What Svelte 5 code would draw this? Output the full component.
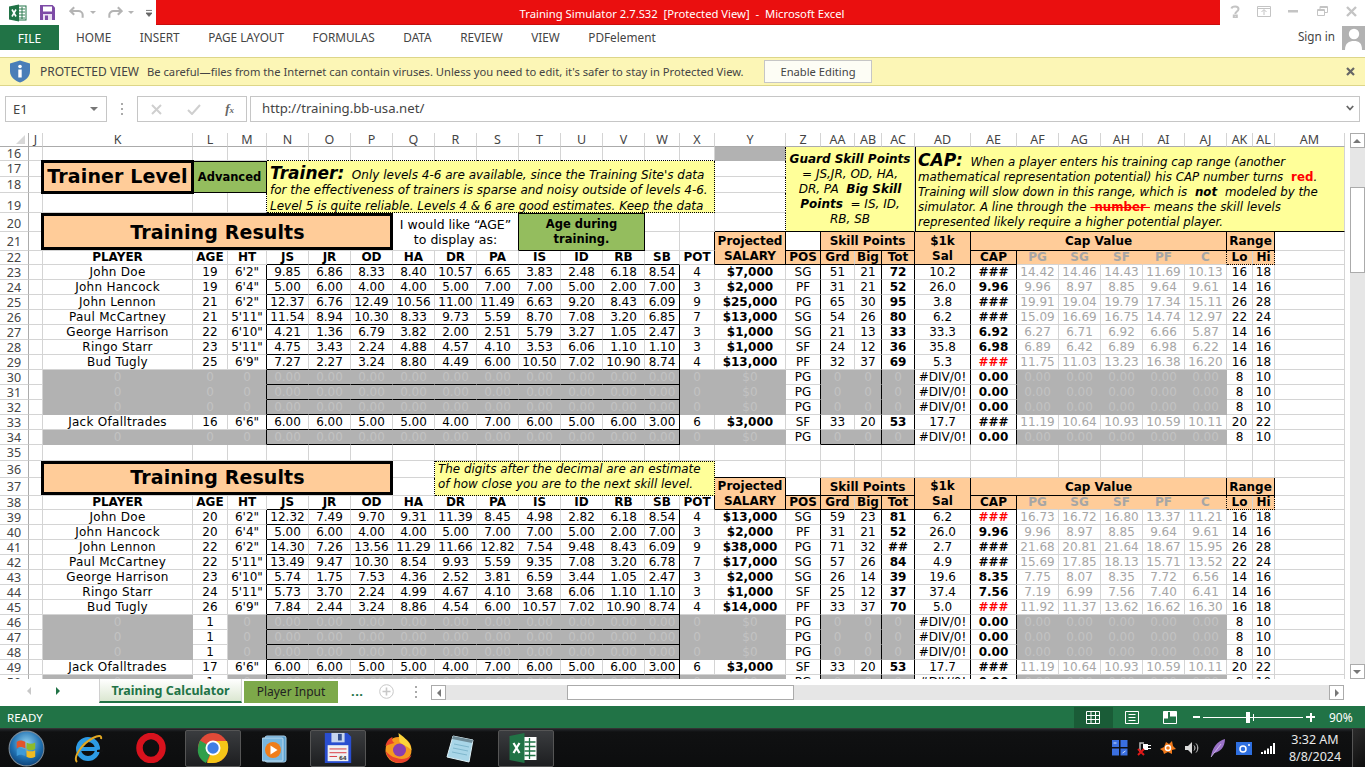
<script>
  // Excel window showing the training simulator sheet. The sheet is one plain table,
  // rows come from the player lists below.
  const COLS = [
    ['', 29], ['J', 14], ['K', 150], ['L', 35], ['M', 39], ['N', 42], ['O', 42], ['P', 42], ['Q', 42], ['R', 42],
    ['S', 42], ['T', 42], ['U', 42], ['V', 42], ['W', 35], ['X', 35], ['Y', 71], ['Z', 35], ['AA', 34], ['AB', 27],
    ['AC', 33], ['AD', 56], ['AE', 46], ['AF', 42], ['AG', 42], ['AH', 42], ['AI', 42], ['AJ', 42], ['AK', 26], ['AL', 22], ['AM', 70]
  ];
  const SKILLS = ['JS', 'JR', 'OD', 'HA', 'DR', 'PA', 'IS', 'ID', 'RB', 'SB'];
  const POSN = ['PG', 'SG', 'SF', 'PF', 'C'];
  const ZERO10 = Array(10).fill('0.00');
  const ZERO5 = Array(5).fill('0.00');

  const p = (name, age, ht, sk, pot, sal, pos, pts, k, cap, caps, range) => ({
    name, age, ht, sk: sk.split(' '), pot, sal, pos, pts: pts.split(' '), k,
    cap: cap.replace('!', ''), red: cap[0] === '!', caps: caps.split(' '), range: range.split(' ')
  });
  const blank = (age, last = false) => ({ blank: true, age, last });

  const first = [
    p('John Doe', '19', `6'2"`, '9.85 6.86 8.33 8.40 10.57 6.65 3.83 2.48 6.18 8.54', '4', '$7,000', 'SG', '51 21 72', '10.2', '###', '14.42 14.46 14.43 11.69 10.13', '16 18'),
    p('John Hancock', '19', `6'4"`, '5.00 6.00 4.00 4.00 5.00 7.00 7.00 5.00 2.00 7.00', '3', '$2,000', 'PF', '31 21 52', '26.0', '9.96', '9.96 8.97 8.85 9.64 9.61', '14 16'),
    p('John Lennon', '21', `6'2"`, '12.37 6.76 12.49 10.56 11.00 11.49 6.63 9.20 8.43 6.09', '9', '$25,000', 'PG', '65 30 95', '3.8', '###', '19.91 19.04 19.79 17.34 15.11', '26 28'),
    p('Paul McCartney', '21', `5'11"`, '11.54 8.94 10.30 8.33 9.73 5.59 8.70 7.08 3.20 6.85', '7', '$13,000', 'SG', '54 26 80', '6.2', '###', '15.09 16.69 16.75 14.74 12.97', '22 24'),
    p('George Harrison', '22', `6'10"`, '4.21 1.36 6.79 3.82 2.00 2.51 5.79 3.27 1.05 2.47', '3', '$1,000', 'SG', '21 13 33', '33.3', '6.92', '6.27 6.71 6.92 6.66 5.87', '14 16'),
    p('Ringo Starr', '23', `5'11"`, '4.75 3.43 2.24 4.88 4.57 4.10 3.53 6.06 1.10 1.10', '3', '$1,000', 'SF', '24 12 36', '35.8', '6.98', '6.89 6.42 6.89 6.98 6.22', '14 16'),
    p('Bud Tugly', '25', `6'9"`, '7.27 2.27 3.24 8.80 4.49 6.00 10.50 7.02 10.90 8.74', '4', '$13,000', 'PF', '32 37 69', '5.3', '!###', '11.75 11.03 13.23 16.38 16.20', '16 18'),
    blank('0'), blank('0'), blank('0'),
    p('Jack Ofalltrades', '16', `6'6"`, '6.00 6.00 5.00 5.00 4.00 7.00 6.00 5.00 6.00 3.00', '6', '$3,000', 'SF', '33 20 53', '17.7', '###', '11.19 10.64 10.93 10.59 10.11', '20 22'),
    blank('0', true)
  ];
  const second = [
    p('John Doe', '20', `6'2"`, '12.32 7.49 9.70 9.31 11.39 8.45 4.98 2.82 6.18 8.54', '4', '$13,000', 'SG', '59 23 81', '6.2', '!###', '16.73 16.72 16.80 13.37 11.21', '16 18'),
    p('John Hancock', '20', `6'4"`, '5.00 6.00 4.00 4.00 5.00 7.00 7.00 5.00 2.00 7.00', '3', '$2,000', 'PF', '31 21 52', '26.0', '9.96', '9.96 8.97 8.85 9.64 9.61', '14 16'),
    p('John Lennon', '22', `6'2"`, '14.30 7.26 13.56 11.29 11.66 12.82 7.54 9.48 8.43 6.09', '9', '$38,000', 'PG', '71 32 ##', '2.7', '###', '21.68 20.81 21.64 18.67 15.95', '26 28'),
    p('Paul McCartney', '22', `5'11"`, '13.49 9.47 10.30 8.54 9.93 5.59 9.35 7.08 3.20 6.78', '7', '$17,000', 'SG', '57 26 84', '4.9', '###', '15.69 17.85 18.13 15.71 13.52', '22 24'),
    p('George Harrison', '23', `6'10"`, '5.74 1.75 7.53 4.36 2.52 3.81 6.59 3.44 1.05 2.47', '3', '$2,000', 'SG', '26 14 39', '19.6', '8.35', '7.75 8.07 8.35 7.72 6.56', '14 16'),
    p('Ringo Starr', '24', `5'11"`, '5.73 3.70 2.24 4.99 4.67 4.10 3.68 6.06 1.10 1.10', '3', '$1,000', 'SF', '25 12 37', '37.4', '7.56', '7.19 6.99 7.56 7.40 6.41', '14 16'),
    p('Bud Tugly', '26', `6'9"`, '7.84 2.44 3.24 8.86 4.54 6.00 10.57 7.02 10.90 8.74', '4', '$14,000', 'PF', '33 37 70', '5.0', '!###', '11.92 11.37 13.62 16.62 16.30', '16 18'),
    blank('1'), blank('1'), blank('1'),
    p('Jack Ofalltrades', '17', `6'6"`, '6.00 6.00 5.00 5.00 4.00 7.00 6.00 5.00 6.00 3.00', '6', '$3,000', 'SF', '33 20 53', '17.7', '###', '11.19 10.64 10.93 10.59 10.11', '20 22'),
    blank('1', true)
  ];
  const TABS = ['HOME', 'INSERT', 'PAGE LAYOUT', 'FORMULAS', 'DATA', 'REVIEW', 'VIEW', 'PDFelement'];
</script>

{#snippet dataRow(n, r)}
  <tr style="height:15px">
    <th class="rh">{n}</th>
    <td></td>
    {#if r.blank}
      <td class="g gt">0</td>
      <td class={r.age === '1' ? '' : 'g gt'}>{r.age}</td>
      <td class="g gt kr">0</td>
      {#each ZERO10 as z, i}<td class="g gt kb" class:kr={i === 9}>{z}</td>{/each}
      <td class="g gt">0</td>
      <td class="g gt">$0</td>
      <td class="kr">PG</td>
      <td class="g gt" class:kb={r.last}>0</td>
      <td class="g gt kr" class:kb={r.last}>0</td>
      <td class="g gt kr" class:kb={r.last}>0</td>
      <td class="kr">#DIV/0!</td>
      <td class="b kr">0.00</td>
      {#each ZERO5 as z}<td class="g gt">{z}</td>{/each}
      <td>8</td>
      <td>10</td>
    {:else}
      <td class="nm">{r.name}</td>
      <td>{r.age}</td>
      <td class="kr">{r.ht}</td>
      {#each r.sk as v, i}<td class="kb" class:kr={i === 9}>{v}</td>{/each}
      <td>{r.pot}</td>
      <td class="b">{r.sal}</td>
      <td class="kr">{r.pos}</td>
      <td>{r.pts[0]}</td>
      <td class="kr">{r.pts[1]}</td>
      <td class="b kr">{r.pts[2]}</td>
      <td class="kr">{r.k}</td>
      <td class="b kr" class:red={r.red}>{r.cap}</td>
      {#each r.caps as v}<td class="soft">{v}</td>{/each}
      <td>{r.range[0]}</td>
      <td>{r.range[1]}</td>
    {/if}
    <td></td>
  </tr>
{/snippet}

{#snippet headTop()}
  <td class="or b kr kb two pt" rowspan="2">Projected<br />SALARY</td>
  <td class="kr kb"></td>
  <td class="or b kr kb pt" colspan="3">Skill Points</td>
  <td class="or b kr kb two pt" rowspan="2">$1k<br />Sal</td>
  <td class="or b kr kb pt" colspan="6">Cap Value</td>
  <td class="or b kb kr pt" colspan="2">Range</td>
  <td></td>
{/snippet}

{#snippet headBottom()}
  <td class="or b kr kb">POS</td>
  <td class="or b kb">Grd</td>
  <td class="or b kb kr">Big</td>
  <td class="or b kb kr">Tot</td>
  <td class="or b kb kr">CAP</td>
  {#each POSN as n, i}<td class="or b softh" class:dotr={i === 4}>{n}</td>{/each}
  <td class="or b do">Lo</td>
  <td class="or b do dotr">Hi</td>
  <td></td>
{/snippet}

<div class="win">
  <!-- title bar -->
  <header class="title">
    <div class="qat">
      <svg class="xl" width="18" height="18" viewBox="0 0 18 18"><rect x="7" y="2" width="10" height="14" fill="#fff" stroke="#217346" /><path d="M10 5h6M10 8h6M10 11h6M10 14h6M13 3v12" stroke="#217346" stroke-width=".9" /><path d="M0 2.5 10 .5v17L0 15.5z" fill="#217346" /><path d="M3 5.5l4 7M7 5.5l-4 7" stroke="#fff" stroke-width="1.6" /></svg>
      <svg class="save" width="15" height="15" viewBox="0 0 15 15"><path d="M0 0h12.5L15 2.5V15H0z" fill="#7d4ba6" /><rect x="3" y="1.5" width="9" height="5" fill="#fff" /><rect x="3" y="9" width="9" height="6" fill="#e9dff1" /><rect x="5" y="10.5" width="3" height="4.5" fill="#7d4ba6" /></svg>
      <svg class="undo" width="16" height="13" viewBox="0 0 17 13"><path d="M5.5 1 1.5 5l4 4M2 5h8a4.500 4 0 0 1 4.500 4v3" fill="none" stroke="#b4b4b4" stroke-width="2.200" /></svg>
      <span class="caret"></span>
      <svg class="redo" width="16" height="13" viewBox="0 0 17 13"><path d="M11.500 1l4 4-4 4M15 5H7a4.500 4 0 0 0-4.500 4v3" fill="none" stroke="#b4b4b4" stroke-width="2.200" /></svg>
      <span class="caret"></span>
      <svg class="cust" width="6" height="8" viewBox="0 0 7 8"><path d="M0 1h7M0 4h7l-3.500 4z" stroke="#666" fill="#666" /></svg>
    </div>
    <div class="redbar">Training Simulator 2.7.S32  [Protected View]  -  Microsoft Excel</div>
    <div class="winbtns">
      <svg width="10" height="13" viewBox="0 0 10 13"><path d="M1.500 3.500C2 1 8.500.5 8.500 4c0 2.500-3.200 2.500-3.200 5M3.800 10.500h3v2.500h-3z" fill="none" stroke="#c4c4c4" stroke-width="2" /></svg>
      <svg width="14" height="11" viewBox="0 0 14 11"><path d="M.5.500h13v10H.500zM.5 2.500h13M7 9V4M4.500 6 7 3.500 9.500 6" fill="none" stroke="#c4c4c4" /></svg>
      <svg width="10" height="3" viewBox="0 0 10 3"><rect width="10" height="2.500" fill="#c4c4c4" /></svg>
      <svg class="rest" width="11" height="10" viewBox="0 0 11 10"><path d="M.5 3.500h7v6h-7zM.5 4.500h7M3 3.500v-3h7.500v6h-3M3 1.500h7.500" fill="none" stroke="#c4c4c4" /></svg>
      <svg class="clos" width="11" height="11" viewBox="0 0 11 11"><path d="M1 1l9 9M10 1l-9 9" stroke="#c4c4c4" stroke-width="2.400" /></svg>
    </div>
  </header>

  <!-- ribbon tabs -->
  <nav class="tabs">
    <div class="file">FILE</div>
    {#each TABS as t}<span class="tab">{t}</span>{/each}
    <span class="signin">Sign in</span>
    <svg class="avatar" width="23" height="24" viewBox="0 0 23 24"><rect width="23" height="24" fill="#b2b2b2" /><circle cx="12" cy="8" r="5.200" fill="#fff" /><path d="M3 24c0-7 4-9 9-9s8 2 8 9z" fill="#fff" /></svg>
  </nav>

  <!-- protected view message -->
  <div class="msg">
    <svg class="shield" width="20" height="23" viewBox="0 0 20 23"><path d="M10 .5 20 3.500V11c0 6-4.500 9.500-10 11.500C4.500 20.500 0 17 0 11V3.500z" fill="#4a7eb8" /><circle cx="10" cy="6.500" r="1.800" fill="#fff" /><rect x="8.300" y="9.500" width="3.400" height="8" fill="#fff" /></svg>
    <b>PROTECTED VIEW</b>
    <span>Be careful—files from the Internet can contain viruses. Unless you need to edit, it's safer to stay in Protected View.</span>
    <button class="enable">Enable Editing</button>
    <svg class="msgx" width="9" height="9" viewBox="0 0 9 9"><path d="M1 1l7 7M8 1 1 8" stroke="#666" stroke-width="2.200" /></svg>
  </div>

  <!-- formula bar -->
  <div class="fbar">
    <div class="namebox"><span>E1</span><i class="tri"></i></div>
    <div class="dots"><i></i><i></i><i></i></div>
    <div class="fbtns">
      <svg width="11" height="11" viewBox="0 0 11 11"><path d="M1 1l9 9M10 1l-9 9" stroke="#cfcfcf" stroke-width="2" /></svg>
      <svg width="14" height="11" viewBox="0 0 14 11"><path d="M1 6l4 4 8-9" fill="none" stroke="#cfcfcf" stroke-width="2" /></svg>
      <em class="fx">f<small>x</small></em>
    </div>
    <div class="formula"><span>http://training.bb-usa.net/</span>
      <svg width="8" height="6" viewBox="0 0 8 6"><path d="M.8 1 4 4.500 7.200 1" fill="none" stroke="#666" stroke-width="1.800" /></svg>
    </div>
  </div>

  <!-- sheet -->
  <div class="sheetwrap">
    <div class="sheet">
      <table>
        <colgroup>{#each COLS as c}<col style="width:{c[1]}px" />{/each}</colgroup>
        <thead>
          <tr style="height:14px">
            {#each COLS as c, i}
              <th class={i ? 'ch' : 'corner'}>{#if i}{c[0]}{:else}<i></i>{/if}</th>
            {/each}
          </tr>
        </thead>
        <tbody>
          <tr style="height:14px">
            <th class="rh">16</th>
            <td></td><td></td><td></td><td></td>
            {#each Array(11) as _}<td class="dotb"></td>{/each}
            <td class="g dotr"></td>
            <td class="yel guard kb" colspan="4" rowspan="5">
              <b><i>Guard Skill Points</i></b><br /><i>= JS,JR, OD, HA,</i><br /><i>DR, PA</i>&nbsp; <b><i>Big Skill</i></b><br /><b><i>Points</i></b><i>&nbsp; = IS, ID,</i><br /><i>RB, SB</i>
            </td>
            <td class="yel cap kl" colspan="10" rowspan="5">
              <p><b class="capt">CAP:</b>&nbsp; When a player enters his training cap range (another</p>
              <p>mathematical representation potential) his CAP number turns <b class="redt">&nbsp;red</b>.</p>
              <p>Training will slow down in this range, which is <b>&nbsp;not&nbsp;</b> modeled by the</p>
              <p>simulator. A line through the <b class="strike">&nbsp;number&nbsp;</b> means the skill levels</p>
              <p>represented likely require a higher potential player.</p>
            </td>
          </tr>
          <tr style="height:16px">
            <th class="rh">17</th>
            <td></td>
            <td class="box thick" rowspan="2"><span>Trainer Level</span></td>
            <td class="grn kb kr kt adv" colspan="2" rowspan="2">Advanced</td>
            <td class="yel note" colspan="11" rowspan="3">
              <div class="lines">
                <p><b class="capt">Trainer:</b>&nbsp; Only levels 4-6 are available, since the Training Site's data</p>
                <p>for the effectiveness of trainers is sparse and noisy outside of levels 4-6.</p>
                <p>Level 5 is quite reliable. Levels 4 &amp; 6 are good estimates. Keep the data</p>
              </div>
            </td>
            <td class="dotr"></td>
          </tr>
          <tr style="height:16px">
            <th class="rh">18</th>
            <td></td>
            <td class="dotr"></td>
          </tr>
          <tr style="height:20px">
            <th class="rh low">19</th>
            <td></td><td></td><td></td><td class="dotr"></td>
            <td class="dotr"></td>
          </tr>
          <tr style="height:19px">
            <th class="rh low2">20</th>
            <td></td>
            <td class="box thick wide" colspan="6" rowspan="2"><span class="tr1">Training Results</span></td>
            <td class="plain kr" colspan="3" rowspan="2">I would like “AGE”<br />to display as:</td>
            <td class="grn b kb kr kt age" colspan="3" rowspan="2">Age during<br />training.</td>
            <td></td><td></td>
            <td class="kb dotr"></td>
          </tr>
          <tr style="height:19px">
            <th class="rh">21</th>
            <td></td>
            <td></td><td class="kr"></td>
            {@render headTop()}
          </tr>
          <tr style="height:14px">
            <th class="rh">22</th>
            <td></td>
            <td class="b">PLAYER</td><td class="b">AGE</td><td class="b">HT</td>
            {#each SKILLS as s}<td class="b kb">{s}</td>{/each}
            <td class="b kr">POT</td>
            {@render headBottom()}
          </tr>
          {#each first as r, i}{@render dataRow(23 + i, r)}{/each}
          <tr style="height:16px"><th class="rh">35</th>{#each Array(30) as _}<td></td>{/each}</tr>
          <tr style="height:17px">
            <th class="rh">36</th>
            <td></td>
            <td class="box thick wide" colspan="6" rowspan="2"><span class="tr2">Training Results</span></td>
            <td class="dotr"></td>
            <td class="yel note short" colspan="7" rowspan="2">
              <p>The digits after the decimal are an estimate</p>
              <p>of how close you are to the next skill level.</p>
            </td>
            <td class="kb"></td>
            {#each Array(14) as _}<td></td>{/each}
          </tr>
          <tr style="height:18px">
            <th class="rh">37</th>
            <td></td>
            <td class="dotr"></td>
            {@render headTop()}
          </tr>
          <tr style="height:14px">
            <th class="rh">38</th>
            <td></td>
            <td class="b">PLAYER</td><td class="b">AGE</td><td class="b">HT</td>
            {#each SKILLS as s}<td class="b kb">{s}</td>{/each}
            <td class="b kr">POT</td>
            {@render headBottom()}
          </tr>
          {#each second as r, i}{@render dataRow(39 + i, r)}{/each}
        </tbody>
      </table>
    </div>
    <aside class="vscroll">
      <button class="sb" aria-label="up"><i class="up"></i></button>
      <div class="track"><div class="thumb"></div></div>
      <button class="sb" aria-label="down"><i class="down"></i></button>
    </aside>
  </div>

  <!-- sheet tabs and horizontal scroll -->
  <div class="sheettabs">
    <i class="nav navl"></i>
    <i class="nav navr"></i>
    <div class="stab active">Training Calculator</div>
    <div class="stab other">Player Input</div>
    <span class="more">...</span>
    <svg class="plus" width="15" height="15" viewBox="0 0 15 15"><circle cx="7.500" cy="7.500" r="6.800" fill="none" stroke="#c8c8c8" /><path d="M7.500 3.500v8M3.500 7.500h8" stroke="#c8c8c8" stroke-width="1.600" /></svg>
    <div class="dots sdots"><i></i><i></i><i></i></div>
    <div class="hscroll">
      <button class="sb" aria-label="left"><i class="left"></i></button>
      <div class="htrack"><div class="hthumb"></div></div>
      <button class="sb" aria-label="right"><i class="right"></i></button>
    </div>
  </div>

  <!-- status bar -->
  <footer class="status">
    <span class="ready">READY</span>
    <div class="views">
      <div class="view sel"><svg width="14" height="13" viewBox="0 0 14 13"><path d="M.5.500h13v12H.500zM.5 4.500h13M.5 8.500h13M5 .500v12M9.500.500v12" fill="none" stroke="#fff" /></svg></div>
      <div class="view"><svg width="14" height="13" viewBox="0 0 14 13"><path d="M.5.500h13v12H.500z" fill="none" stroke="#fff" /><path d="M3.500 3.500h7M3.500 6.500h7M3.500 9.500h7" stroke="#fff" /></svg></div>
      <div class="view"><svg width="14" height="13" viewBox="0 0 14 13"><path d="M.5.500h13v12H.500z" fill="none" stroke="#fff" /><path d="M.5.500h4.500v7H.500zM7 .500h6.500v5H7z" fill="#fff" /></svg></div>
    </div>
    <div class="zoomer">
      <i class="zm"></i>
      <div class="zline"><i class="ztick"></i><i class="zknob"></i></div>
      <i class="zp"></i>
    </div>
    <span class="pct">90%</span>
  </footer>

  <!-- windows taskbar -->
  <div class="taskbar">
    <div class="orb">
      <svg width="37" height="37" viewBox="0 0 34 34"><defs><radialGradient id="o" cx=".5" cy=".35" r=".7"><stop offset="0" stop-color="#8fd0ef" /><stop offset=".6" stop-color="#1f6fb0" /><stop offset="1" stop-color="#0b3a6d" /></radialGradient></defs><circle cx="17" cy="17" r="16" fill="url(#o)" stroke="#7a8a98" /><path d="M8 11c3-2 5-1.500 8 0v6c-3-1.500-5-2-8 0z" fill="#e2542c" /><path d="M17 11.500c3 1.500 5 1.500 8 0v6c-3 1.500-5 1.500-8 0z" fill="#8dbb2a" /><path d="M8 18c3-2 5-1.500 8 0v6c-3-1.500-5-2-8 0z" fill="#3e9ad8" /><path d="M17 18.500c3 1.500 5 1.500 8 0v6c-3 1.500-5 1.500-8 0z" fill="#f1bb22" /></svg>
    </div>
    <div class="app">
      <svg width="30" height="32" viewBox="0 0 30 32"><circle cx="15" cy="17" r="9.500" fill="none" stroke="#2d9be4" stroke-width="5" /><path d="M8 17h15" stroke="#2d9be4" stroke-width="4" /><path d="M24 20h6v-3l-6 1z" fill="#101112" /><path d="M4 30C0 26 8 12 20 6c5-2.500 9-3 8 1" fill="none" stroke="#e2a823" stroke-width="2" /></svg>
    </div>
    <div class="app">
      <svg width="30" height="30" viewBox="0 0 30 30"><ellipse cx="15" cy="15" rx="11.500" ry="12" fill="none" stroke="#d7121d" stroke-width="6.500" /></svg>
    </div>
    <div class="app on">
      <svg width="32" height="32" viewBox="0 0 32 32"><circle cx="16" cy="16" r="15" fill="#e14a38" /><path d="M3 8.500 16 16 9 31C3 28 0 22 1 16c.3-2.800 1-5.300 2-7.500z" fill="#2f9f4a" /><path d="M16 9h14c2.500 6 1 13-3 17-3 3.500-7 5-11 5l-6 0 6-15z" fill="#f5c518" /><circle cx="16" cy="16" r="7.500" fill="#fff" /><circle cx="16" cy="16" r="5.700" fill="#3f7ee4" /></svg>
    </div>
    <div class="app">
      <svg width="28" height="32" viewBox="0 0 28 32"><rect x="3" y="4" width="21" height="26" rx="2" fill="#5a9fce" stroke="#a7cde6" /><rect x="0" y="6" width="21" height="23" rx="1" fill="#78b6de" stroke="#bcd9ec" /><circle cx="11" cy="18" r="8" fill="#ef7d1a" /><path d="M8.500 13.500v9l7-4.500z" fill="#fff" /></svg>
    </div>
    <div class="app on">
      <svg width="32" height="32" viewBox="0 0 30 34"><path d="M1 1h24l4 4v28H1z" fill="#2a4ed0" /><rect x="8" y="1" width="14" height="10" fill="#c9d6ee" /><rect x="15" y="2" width="4" height="7" fill="#36518f" /><rect x="4" y="14" width="22" height="17" fill="#f1f1f1" /><path d="M6 18h18M6 22h18M6 26h8" stroke="#d8333a" /><text x="16" y="30" class="f64">64</text></svg>
    </div>
    <div class="app ff">
      <svg width="29" height="32" viewBox="0 0 28 32"><circle cx="14" cy="18" r="13" fill="#f59a1f" /><path d="M14 1c7 5 12 10 13 17-4-4-9-5-12-8z" fill="#fbd43a" /><path d="M1 14c1-5 4-8 7-9-1 3 0 5 2 6-4 1-7 2-9 3z" fill="#e8422d" /><circle cx="15" cy="18" r="6.500" fill="#8a3fb0" /><path d="M1 19c2 8 8 12 14 12s10-3 12-8c-4 4-10 5-15 3-5-1-8-4-11-7z" fill="#e8422d" /></svg>
    </div>
    <div class="app ff">
      <svg width="30" height="32" viewBox="0 0 28 32"><path d="M6 4 26 8 22 30 0 25z" fill="#a9d6e8" stroke="#dff1f7" /><path d="M6 4 26 8 25 11 5 7z" fill="#708c98" /><path d="M7 12l15 3M6 16l15 3M5 20l15 3" stroke="#7fb7cd" /></svg>
    </div>
    <div class="app on ff">
      <svg width="29" height="32" viewBox="0 0 28 32"><rect x="12" y="5" width="15" height="23" fill="#fff" /><path d="M15 10h11M15 14.500h11M15 19h11M15 23.500h11M20 6v21" stroke="#217346" stroke-width="1.300" /><path d="M0 4 15 1v30L0 28z" fill="#217346" /><path d="M4 11l6 10M10 11 4 21" stroke="#fff" stroke-width="2.200" /></svg>
    </div>
    <div class="tray">
      <svg width="16" height="16" viewBox="0 0 16 16"><rect width="7" height="7" fill="#3a6fe0" /><rect x="8.500" width="7" height="7" fill="#3a6fe0" /><rect y="8.500" width="7" height="7" fill="#3a6fe0" /><rect x="8.500" y="8.500" width="7" height="7" fill="#3a6fe0" /><path d="M1.500 3h3M10.500 13l3-2" stroke="#cfe0ff" /></svg>
      <svg width="14" height="16" viewBox="0 0 14 16"><path d="M7 3H3v9" fill="none" stroke="#bbb" stroke-width="1.500" /><rect x="6" y="4" width="5" height="6" fill="#fff" /><path d="M11 5.500h3M11 8.500h3" stroke="#fff" /><path d="M1 9l6 6M7 9l-6 6" stroke="#e01818" stroke-width="2" /></svg>
      <svg width="16" height="14" viewBox="0 0 16 14"><path d="M0 8 4 6 6 1l3 2 3-3 1 5 3 3-4 1 0 4-4-2-4 2-1-3z" fill="#f07a1c" /><circle cx="8" cy="7" r="2.500" fill="none" stroke="#fff" stroke-width="1.400" /></svg>
      <svg width="14" height="14" viewBox="0 0 14 14"><path d="M0 5h3l4-4v12l-4-4H0z" fill="#dadada" /><path d="M9 4.500c1.300 1.500 1.300 3.500 0 5M11 2.500c2.400 2.500 2.400 6.500 0 9" fill="none" stroke="#dadada" /></svg>
      <svg class="feather" width="15" height="20" viewBox="0 0 15 20"><path d="M1 19C2 10 7 3 15 1c0 8-5 13-11 14z" fill="#9a72c8" /><path d="M1 19 11 6" stroke="#d8c6ee" stroke-width=".8" /></svg>
      <svg class="cam" width="16" height="13" viewBox="0 0 16 13"><rect width="16" height="13" fill="#2e6fe0" /><circle cx="7" cy="7" r="3" fill="none" stroke="#fff" stroke-width="1.500" /><circle cx="13" cy="3" r="1" fill="#fff" /></svg>
      <svg width="14" height="11" viewBox="0 0 14 11"><rect y="9" width="2" height="2" fill="#fff" /><rect x="3" y="7.500" width="2" height="3.500" fill="#fff" /><rect x="6" y="5.500" width="2" height="5.500" fill="#fff" /><rect x="9" y="3" width="2" height="8" fill="#fff" /><rect x="12" y="0" width="2" height="11" fill="#fff" /></svg>
    </div>
    <div class="clock"><span>3:32 AM</span><span>8/8/2024</span></div>
    <div class="desk"></div>
  </div>
</div>

<style>
  :global(body) { margin: 0; background: #fff; overflow: hidden; }
  .win {
    width: 1365px; height: 767px; display: flex; flex-direction: column; overflow: hidden;
    font-family: "Noto Sans", "Open Sans", sans-serif; font-size: 12px; color: #444;
  }

  /* title bar */
  .title { height: 25px; display: flex; flex: none; }
  .qat { width: 156px; flex: none; position: relative; display: flex; align-items: center; }
  .qat svg { flex: none; }
  .xl { margin-left: 9px; }
  .save { margin-left: 13px; }
  .undo { margin-left: 14px; }
  .caret { width: 0; height: 0; border: 3px solid transparent; border-top: 3px solid #b4b4b4; border-bottom: 0; margin-left: 5px; }
  .redo { margin-left: 11px; }
  .cust { margin-left: 12px; }
  .redbar {
    width: 1064px; height: 24.500px; background: #ea0f0f; color: #fff; flex: none; text-align: center; white-space: pre;
    line-height: 27px; border-bottom: 1px solid #c90d0d; box-sizing: border-box; padding-right: 12px; font-size: 11.250px;
  }
  .winbtns { flex: 1; display: flex; align-items: center; gap: 17px; padding: 0 0 3px 10px; }
  .rest { margin-left: 2px; }
  .clos { margin-left: 1px; }

  /* ribbon tabs */
  .tabs { height: 25px; flex: none; display: flex; align-items: center; }
  .file { width: 59px; height: 25px; background: #217346; color: #fff; text-align: center; line-height: 27px; margin-right: 17px; }
  .tab { margin-right: 28.500px; margin-bottom: 2px; color: #444; white-space: nowrap; font-size: 11.800px; }
  .signin { margin-left: auto; margin-right: 7px; margin-bottom: 3px; color: #444; font-size: 11.700px; }
  .avatar { flex: none; margin-top: 0; }

  /* protected view */
  .msg {
    margin-top: 7px; height: 29px; box-sizing: border-box; flex: none; background: #fcf6b6; border-top: 1px solid #ddd689;
    border-bottom: 1px solid #ddd689; display: flex; align-items: center; white-space: nowrap; color: #444; font-size: 11.200px;
  }
  .shield { margin-left: 10px; margin-right: 10px; flex: none; }
  .msg b { font-weight: 400; font-size: 12px; margin-right: 8px; }
  .enable {
    position: absolute; left: 764px; top: 60px; width: 108px; height: 23px; background: #fdfdf5; border: 1px solid #c6c6c6;
    font: inherit; color: #444; padding: 0;
  }
  .msgx { margin-left: auto; margin-right: 10px; }

  /* formula bar */
  .fbar { height: 47px; flex: none; box-sizing: border-box; padding: 10px 5px 11px; display: flex; }
  .namebox {
    width: 102px; box-sizing: border-box; border: 1px solid #c6c6c6; display: flex; align-items: center; justify-content: space-between;
    padding: 0 8px 0 7px; font-size: 13px; color: #444;
  }
  .tri { width: 0; height: 0; border: 4px solid transparent; border-top: 4px solid #777; border-bottom: 0; }
  .dots { display: flex; flex-direction: column; gap: 3px; justify-content: center; margin: 0 14px; }
  .dots i { width: 2px; height: 2px; background: #aaa; display: block; }
  .fbtns {
    width: 110px; box-sizing: border-box; border: 1px solid #c6c6c6; display: flex; align-items: center; justify-content: space-between;
    padding: 0 12px 0 13px;
  }
  .fx { font: italic bold 13px "Liberation Serif", serif; color: #666; }
  .fx small { font-size: 9px; }
  .formula {
    flex: 1; margin-left: 3px; border: 1px solid #c6c6c6; box-sizing: border-box; display: flex; align-items: center;
    justify-content: space-between; padding: 0 5px 2px 11px; font-size: 13.200px; color: #444;
  }

  /* sheet */
  .sheetwrap { height: 546px; flex: none; display: flex; }
  .sheet { width: 1345px; overflow: hidden; flex: none; }
  table {
    table-layout: fixed; width: 1345px; border-collapse: separate; border-spacing: 0;
    font: 12px/13px "DejaVu Sans", Verdana, sans-serif; color: #000;
  }
  td, th { padding: 0; text-align: center; vertical-align: middle; white-space: nowrap; box-sizing: border-box; }
  td { border-right: 1px solid #d4d4d4; border-bottom: 1px solid #d4d4d4; }
  th { font: 400 12.500px/13px "Noto Sans", sans-serif; color: #444; background: #fff; }
  .ch { border-right: 1px solid #d4d4d4; border-bottom: 1px solid #ababab; }
  .corner { border-right: 1px solid #ababab; border-bottom: 1px solid #ababab; position: relative; }
  .corner i { position: absolute; right: 3px; bottom: 2px; width: 0; height: 0; border-left: 9px solid transparent; border-bottom: 9px solid #d8d8d8; }
  .rh { border-right: 1px solid #ababab; border-bottom: 1px solid #d4d4d4; }
  .low { padding-top: 6px; }
  .low2 { padding-top: 3px; }

  .b { font-weight: 700; }
  .nm { letter-spacing: .28px; }
  .g { background: #b2b2b2; border-right-color: #b2b2b2; border-bottom-color: #b2b2b2; }
  .gt { color: #c2c2c2; }
  .or { background: #ffcc99; }
  .yel { background: #ffff99; }
  .grn { background: #94bd5e; }
  .red { color: #f00; }
  .soft { color: #a6a6a6; }
  .softh { color: #a6a6a6; border-right-color: #ffcc99; }
  .kr { border-right-color: #000; }
  .kb { border-bottom-color: #000; }
  .kt { border-top: 1px solid #000; }
  .kl { border-left: 1px solid #000; }
  .dotb { border-bottom: 1px dotted #000; }
  .dotr { border-right: 1px dotted #000; }
  .do { border-bottom: 1px dotted #000; }
  .two { line-height: 15px; }
  .pt { padding-top: 1px; }

  /* the heavy boxes sit across the grid lines */
  .box { background: #ffcc99; position: relative; font-weight: 700; font-size: 19px; letter-spacing: .12px; }
  .box.thick::after { content: ""; position: absolute; inset: -1px -2px -2px -2px; border: 3px solid #000; }
  .box.wide::after { inset: 0 -1px 0 -2px; }
  .box span { position: relative; }
  .tr1 { top: 1px; }
  .tr2 { top: -1px; }
  .adv { font-weight: 700; font-size: 11.500px; }
  .age { line-height: 15px; font-size: 11.500px; }
  .plain { line-height: 15px; font-size: 12.500px; }

  .note, .cap { text-align: left; vertical-align: top; font-style: italic; font-size: 12px; }
  .note p, .cap p { margin: 0; }
  .capt { font-size: 17px; font-style: italic; line-height: 0; }
  .note { line-height: 15.400px; padding: 7px 0 0 3px; border-bottom: 1px dotted #000; border-right: 1px dotted #000; }
  .lines { height: 44px; }
  .note.short { border-top: 1px dotted #000; padding-top: 0; line-height: 15px; font-size: 11.900px; }
  .cap { padding: 8px 0 0 2px; border-bottom: 1px solid #000; line-height: 15px; font-size: 11.800px; }
  .redt { color: #f00; font-style: normal; }
  .cap b { font-style: italic; }
  .cap b.redt { font-style: normal; }
  .cap b.strike { color: #f00; text-decoration: line-through; font-style: normal; }
  .guard { font-size: 12px; line-height: 15px; vertical-align: top; padding-top: 5px; }

  /* scrollbars */
  .vscroll { width: 20px; flex: none; display: flex; flex-direction: column; align-items: center; box-sizing: border-box; padding-left: 4px; background: #fff; }
  .sb { width: 15px; height: 15px; padding: 0; border: 1px solid #ababab; background: #fff; display: flex; align-items: center; justify-content: center; flex: none; box-sizing: border-box; }
  .sb i { width: 0; height: 0; display: block; }
  .up { border: 4px solid transparent; border-bottom: 4px solid #777; border-top: 0; }
  .down { border: 4px solid transparent; border-top: 4px solid #777; border-bottom: 0; }
  .left { border: 4px solid transparent; border-right: 4px solid #777; border-left: 0; }
  .right { border: 4px solid transparent; border-left: 4px solid #777; border-right: 0; }
  .track { flex: 1; width: 15px; background: #e6e6e6; padding-top: 39px; box-sizing: border-box; }
  .thumb { height: 86px; background: #fff; border: 1px solid #ababab; box-sizing: border-box; }

  /* sheet tabs */
  .sheettabs { height: 27px; flex: none; display: flex; align-items: flex-start; position: relative; background: #fff; box-sizing: border-box; }
  .nav { width: 0; height: 0; display: block; margin-top: 8px; border: 4px solid transparent; }
  .navl { margin-left: 27px; border-right: 4px solid #c8c8c8; border-left: 0; }
  .navr { margin-left: 25px; border-left: 4px solid #217346; border-right: 0; }
  .stab { box-sizing: border-box; text-align: center; white-space: nowrap; flex: none; }
  .active { margin-left: 39px; width: 143px; height: 24px; color: #217346; font-weight: 700; background: linear-gradient(#fff, #dbe7d1); border-bottom: 2px solid #217346; border-left: 1px solid #d0d0d0; border-right: 1px solid #d0d0d0; font-size: 12.500px; line-height: 23px; }
  .other { margin-left: 2px; margin-top: 2px; height: 22px; width: 94px; background: #7da94a; color: #222; line-height: 22px; }
  .more { margin-left: 13px; color: #217346; font-weight: 700; font-size: 13px; line-height: 24px; letter-spacing: .5px; }
  .plus { margin-left: 16px; margin-top: 5px; flex: none; }
  .sdots { margin: 5px 0 0 21px; height: 15px; }
  .hscroll { display: flex; position: absolute; left: 431px; top: 6px; width: 913px; }
  .htrack { flex: 1; background: #e6e6e6; height: 15px; padding-left: 121px; box-sizing: border-box; }
  .hthumb { width: 227px; height: 15px; background: #fff; border: 1px solid #ababab; box-sizing: border-box; }

  /* status */
  .status { height: 22px; flex: none; background: #217346; color: #fff; display: flex; align-items: center; position: relative; }
  .ready { margin-left: 7px; font-size: 11.500px; }
  .views { display: flex; margin-left: auto; }
  .view { width: 38.500px; height: 21px; display: flex; align-items: center; justify-content: center; }
  .view.sel { background: #1a5c37; }
  .zoomer { display: flex; align-items: center; margin-left: 3.500px; width: 122px; }
  .zm { width: 7px; height: 2px; background: #fff; display: block; flex: none; }
  .zp { width: 9px; height: 9px; flex: none; display: block; background: linear-gradient(#fff, #fff) center/9px 2px no-repeat, linear-gradient(#fff, #fff) center/2px 9px no-repeat; }
  .zline { flex: 1; height: 1px; background: #fff; margin: 0 3px; position: relative; }
  .ztick { position: absolute; left: 50px; top: -3px; width: 1px; height: 7px; background: #fff; }
  .zknob { position: absolute; left: 43px; top: -5px; width: 4px; height: 11px; background: #fff; }
  .pct { margin: 0 11px 0 14px; width: 25px; font-size: 12px; }

  /* taskbar */
  .taskbar {
    flex: 1; background: linear-gradient(#23262a 0, #101112 3px, #0c0d0e 100%); display: flex; align-items: center; position: relative; color: #eee;
    border-top: 1px solid #333;
  }
  .orb { width: 52px; display: flex; justify-content: center; flex: none; margin-right: 8px; }
  .app { width: 56px; height: 37px; margin-right: 6.500px; flex: none; display: flex; align-items: center; justify-content: center; box-sizing: border-box; border: 1px solid transparent; }
  .app.on { background: linear-gradient(#3a3c3f, #1d1e20); border-color: #555; border-radius: 2px; }
  .ff svg { margin-left: -5px; }
  .f64 { font: 700 6px "DejaVu Sans", sans-serif; fill: #444; }
  .tray { position: absolute; left: 1112px; top: 0; height: 38px; display: flex; align-items: center; gap: 9px; }
  .feather { margin-left: 2px; }
  .cam { margin-left: 2px; }
  .clock { position: absolute; left: 1283px; width: 64px; top: 3px; display: flex; flex-direction: column; align-items: center; gap: 1px; font-size: 12.500px; line-height: 16px; color: #eaeaea; }
  .desk { position: absolute; right: 0; top: 0; width: 12px; height: 38px; background: linear-gradient(135deg, #2c2c2c, #0d0d0d); border-left: 1px solid #555; }
</style>
